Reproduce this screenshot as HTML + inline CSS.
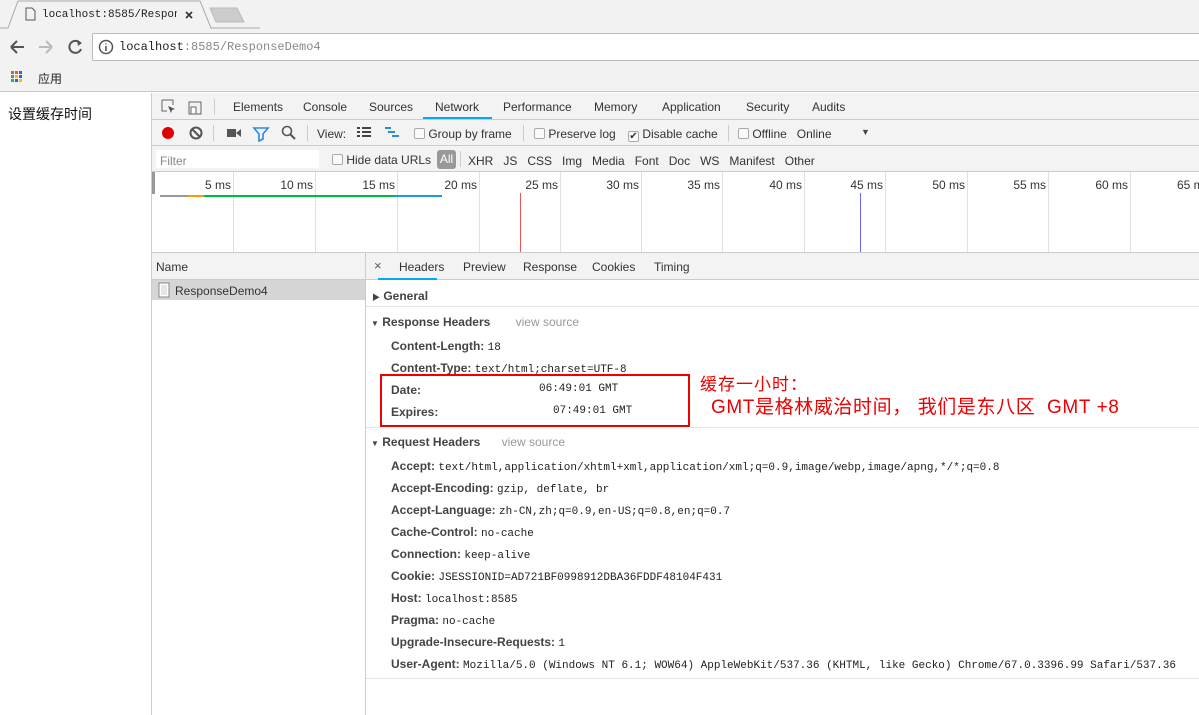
<!DOCTYPE html><html><head><meta charset="utf-8"><style>
*{margin:0;padding:0;box-sizing:border-box}
body{width:1199px;height:715px;overflow:hidden;background:#fff;font-family:"Liberation Sans","Noto Sans CJK SC",sans-serif;font-size:12px;color:#333;position:relative}
.a{position:absolute;white-space:nowrap}
.mono{font-family:"Liberation Mono",monospace;font-size:11px;color:#222}
.b{font-weight:bold;color:#444}
.g{color:#999}
.cb{display:inline-block;width:11px;height:11px;border:1px solid #aaa;border-radius:2px;background:#fafafa;vertical-align:-1px}
</style></head><body>
<div class="a" style="left:0;top:0;width:1199px;height:28px;background:#f2f2f2"></div>
<div class="a" style="left:0;top:28px;width:1199px;height:64px;background:#f2f2f2;border-bottom:1px solid #c8c8c8"></div>
<svg class="a" style="left:0;top:0" width="260" height="30"><path d="M0 28 L8 28 L18 1 L200 1 L211 28 L260 28" fill="#f2f2f2" stroke="#aaa"/><path d="M210 8 L237 8 L244 22 L216 22 Z" fill="#ccc" stroke="#bbb"/><path d="M26 8h6l3 3v9h-9z" fill="none" stroke="#555"/><path d="M186 12l6 6M192 12l-6 6" stroke="#333" stroke-width="1.6"/></svg>
<div class="a mono" style="left:42px;top:9px;font-size:11px;width:135px;overflow:hidden">localhost:8585/Respons<span style="color:#bbb">e</span></div>
<svg class="a" style="left:8px;top:38px" width="80" height="18"><path d="M3 9h13M3 9l6-6M3 9l6 6" stroke="#555" stroke-width="2" fill="none"/><path d="M31 9h13M44 9l-6-6M44 9l-6 6" stroke="#bbb" stroke-width="2" fill="none"/><path d="M72 5a6 6 0 1 0 1 6" stroke="#555" stroke-width="2" fill="none"/><path d="M69 2l5 3-4 3z" fill="#555"/></svg>
<div class="a" style="left:92px;top:33px;width:1110px;height:28px;background:#fff;border:1px solid #bbb;border-radius:2px"></div>
<svg class="a" style="left:98px;top:39px" width="16" height="16"><circle cx="8" cy="8" r="6.5" fill="none" stroke="#555" stroke-width="1.5"/><path d="M8 7v5M8 4.5v1" stroke="#555" stroke-width="1.6"/></svg>
<div class="a mono" style="left:119px;top:40px;font-size:12px;color:#222">localhost<span style="color:#888">:8585/ResponseDemo4</span></div>
<svg class="a" style="left:11px;top:71px" width="12" height="12"><g><rect x="0" y="0" width="3" height="3" fill="#e53"/><rect x="4" y="0" width="3" height="3" fill="#e53"/><rect x="8" y="0" width="3" height="3" fill="#36c"/><rect x="0" y="4" width="3" height="3" fill="#3a5"/><rect x="4" y="4" width="3" height="3" fill="#fb0"/><rect x="8" y="4" width="3" height="3" fill="#36c"/><rect x="0" y="8" width="3" height="3" fill="#3a5"/><rect x="4" y="8" width="3" height="3" fill="#36c"/><rect x="8" y="8" width="3" height="3" fill="#fb0"/></g></svg>
<div class="a" style="left:38px;top:70px;color:#222">应用</div>
<div class="a" style="left:8px;top:104px;font-size:14px;color:#111">设置缓存时间</div>
<div class="a" style="left:151px;top:93px;width:1048px;height:622px;border-left:1px solid #ccc;background:#fff"></div>
<div class="a" style="left:152px;top:93px;width:1047px;height:27px;background:#f3f3f3;border-bottom:1px solid #ccc"></div>
<svg class="a" style="left:160px;top:98px" width="50" height="18"><path d="M2 2h11v5M2 2v11h5" stroke="#666" fill="none"/><path d="M8 8l7 3-3 1-1 3z" fill="#555"/><rect x="29" y="4" width="12" height="12" fill="none" stroke="#666"/><rect x="31" y="9" width="5" height="7" fill="#fff" stroke="#666"/></svg>
<div class="a" style="left:214px;top:99px;width:1px;height:16px;background:#ccc"></div>
<div class="a" style="left:233px;top:100px;color:#333">Elements</div>
<div class="a" style="left:303px;top:100px">Console</div>
<div class="a" style="left:369px;top:100px">Sources</div>
<div class="a" style="left:435px;top:100px">Network</div>
<div class="a" style="left:423px;top:117px;width:69px;height:2px;background:#03a9f4"></div>
<div class="a" style="left:503px;top:100px">Performance</div>
<div class="a" style="left:594px;top:100px">Memory</div>
<div class="a" style="left:662px;top:100px">Application</div>
<div class="a" style="left:746px;top:100px">Security</div>
<div class="a" style="left:812px;top:100px">Audits</div>
<div class="a" style="left:152px;top:120px;width:1047px;height:26px;background:#f3f3f3;border-bottom:1px solid #ccc"></div>
<svg class="a" style="left:158px;top:124px" width="145" height="18"><circle cx="10" cy="9" r="6" fill="#d00"/><circle cx="38" cy="9" r="5.5" fill="none" stroke="#555" stroke-width="2"/><path d="M34 5l8 8" stroke="#555" stroke-width="2"/><rect x="69" y="5" width="9" height="8" fill="#555"/><path d="M78 9l5-4v8z" fill="#555"/><path d="M96 4h14l-5 6v5l-4 2v-7z" fill="none" stroke="#2a8ae0" stroke-width="1.6"/><circle cx="129" cy="7" r="4.5" fill="none" stroke="#555" stroke-width="1.6"/><path d="M132 10l5 5" stroke="#555" stroke-width="2"/></svg>
<div class="a" style="left:213px;top:125px;width:1px;height:16px;background:#ccc"></div>
<div class="a" style="left:307px;top:125px;width:1px;height:16px;background:#ccc"></div>
<div class="a" style="left:317px;top:127px">View:</div>
<svg class="a" style="left:356px;top:126px" width="46" height="14"><path d="M1 2h3M6 2h9M1 6h3M6 6h9M1 10h3M6 10h9" stroke="#444" stroke-width="2"/><path d="M29 2h6M32 6h7M36 10h7" stroke="#2a8ae0" stroke-width="2"/></svg>
<div class="a" style="left:414px;top:127px"><span class="cb"></span> Group by frame</div>
<div class="a" style="left:523px;top:125px;width:1px;height:16px;background:#ccc"></div>
<div class="a" style="left:534px;top:127px"><span class="cb"></span> Preserve log</div>
<div class="a" style="left:628px;top:127px"><span class="cb" style="text-align:center;font-size:10px;line-height:9px">✔</span> Disable cache</div>
<div class="a" style="left:728px;top:125px;width:1px;height:16px;background:#ccc"></div>
<div class="a" style="left:738px;top:127px"><span class="cb"></span> Offline&nbsp;&nbsp; Online</div>
<div class="a" style="left:861px;top:127px;font-size:9px;color:#444">▼</div>
<div class="a" style="left:152px;top:146px;width:1047px;height:26px;background:#f3f3f3;border-bottom:1px solid #ccc"></div>
<div class="a" style="left:156px;top:150px;width:163px;height:18px;background:#fff"></div>
<div class="a" style="left:160px;top:154px;color:#888">Filter</div>
<div class="a" style="left:332px;top:153px"><span class="cb"></span> Hide data URLs</div>
<div class="a" style="left:437px;top:150px;width:19px;height:19px;background:#999;border-radius:3px;color:#fff;text-align:center;line-height:19px">All</div>
<div class="a" style="left:460px;top:151px;width:1px;height:16px;background:#ccc"></div>
<div class="a" style="left:468px;top:154px">XHR&nbsp;&nbsp; JS&nbsp;&nbsp; CSS&nbsp;&nbsp; Img&nbsp;&nbsp; Media&nbsp;&nbsp; Font&nbsp;&nbsp; Doc&nbsp;&nbsp; WS&nbsp;&nbsp; Manifest&nbsp;&nbsp; Other</div>
<div class="a" style="left:152px;top:172px;width:3px;height:22px;background:#999"></div>
<div class="a" style="left:233px;top:172px;width:1px;height:80px;background:#e0e0e0"></div><div class="a" style="left:200px;top:178px;width:31px;text-align:right">5 ms</div>
<div class="a" style="left:315px;top:172px;width:1px;height:80px;background:#e0e0e0"></div><div class="a" style="left:270px;top:178px;width:43px;text-align:right">10 ms</div>
<div class="a" style="left:397px;top:172px;width:1px;height:80px;background:#e0e0e0"></div><div class="a" style="left:352px;top:178px;width:43px;text-align:right">15 ms</div>
<div class="a" style="left:479px;top:172px;width:1px;height:80px;background:#e0e0e0"></div><div class="a" style="left:434px;top:178px;width:43px;text-align:right">20 ms</div>
<div class="a" style="left:560px;top:172px;width:1px;height:80px;background:#e0e0e0"></div><div class="a" style="left:515px;top:178px;width:43px;text-align:right">25 ms</div>
<div class="a" style="left:641px;top:172px;width:1px;height:80px;background:#e0e0e0"></div><div class="a" style="left:596px;top:178px;width:43px;text-align:right">30 ms</div>
<div class="a" style="left:722px;top:172px;width:1px;height:80px;background:#e0e0e0"></div><div class="a" style="left:677px;top:178px;width:43px;text-align:right">35 ms</div>
<div class="a" style="left:804px;top:172px;width:1px;height:80px;background:#e0e0e0"></div><div class="a" style="left:759px;top:178px;width:43px;text-align:right">40 ms</div>
<div class="a" style="left:885px;top:172px;width:1px;height:80px;background:#e0e0e0"></div><div class="a" style="left:840px;top:178px;width:43px;text-align:right">45 ms</div>
<div class="a" style="left:967px;top:172px;width:1px;height:80px;background:#e0e0e0"></div><div class="a" style="left:922px;top:178px;width:43px;text-align:right">50 ms</div>
<div class="a" style="left:1048px;top:172px;width:1px;height:80px;background:#e0e0e0"></div><div class="a" style="left:1003px;top:178px;width:43px;text-align:right">55 ms</div>
<div class="a" style="left:1130px;top:172px;width:1px;height:80px;background:#e0e0e0"></div><div class="a" style="left:1085px;top:178px;width:43px;text-align:right">60 ms</div>
<div class="a" style="left:1177px;top:178px">65 ms</div>
<div class="a" style="left:160px;top:195px;width:28px;height:2px;background:#999"></div>
<div class="a" style="left:188px;top:195px;width:16px;height:2px;background:#f90"></div>
<div class="a" style="left:204px;top:195px;width:192px;height:2px;background:#0b4"></div>
<div class="a" style="left:396px;top:195px;width:46px;height:2px;background:#1a9be8"></div>
<div class="a" style="left:520px;top:193px;width:1px;height:59px;background:#e55"></div>
<div class="a" style="left:860px;top:193px;width:1px;height:59px;background:#66f"></div>
<div class="a" style="left:152px;top:252px;width:1047px;height:1px;background:#ccc"></div>
<div class="a" style="left:152px;top:253px;width:214px;height:27px;background:#f3f3f3;border-bottom:1px solid #ccc"></div>
<div class="a" style="left:156px;top:260px">Name</div>
<div class="a" style="left:152px;top:280px;width:214px;height:20px;background:#d6d6d6"></div>
<svg class="a" style="left:158px;top:282px" width="12" height="16"><path d="M1 1h10v14h-10z" fill="#fff" stroke="#888"/><path d="M3 4h6M3 6h6M3 8h6M3 10h6M3 12h6" stroke="#ccc"/></svg>
<div class="a" style="left:175px;top:284px">ResponseDemo4</div>
<div class="a" style="left:365px;top:253px;width:1px;height:462px;background:#ccc"></div>
<div class="a" style="left:366px;top:253px;width:833px;height:27px;background:#f3f3f3;border-bottom:1px solid #ccc"></div>
<div class="a" style="left:374px;top:258px;font-size:13px;color:#555">×</div>
<div class="a" style="left:399px;top:260px">Headers</div>
<div class="a" style="left:378px;top:278px;width:59px;height:2px;background:#03a9f4"></div>
<div class="a" style="left:463px;top:260px">Preview</div>
<div class="a" style="left:523px;top:260px">Response</div>
<div class="a" style="left:592px;top:260px">Cookies</div>
<div class="a" style="left:654px;top:260px">Timing</div>
<div class="a b" style="left:372px;top:289px"><span style="font-size:8px">▶</span> General</div>
<div class="a" style="left:366px;top:306px;width:833px;height:1px;background:#e4e4e4"></div>
<div class="a b" style="left:371px;top:315px"><span style="font-size:8px">▼</span> Response Headers <span class="g" style="font-weight:normal;margin-left:22px">view source</span></div>
<div class="a" style="left:391px;top:339px"><span class="b">Content-Length:</span> <span class="mono">18</span></div>
<div class="a" style="left:391px;top:361px"><span class="b">Content-Type:</span> <span class="mono">text/html;charset=UTF-8</span></div>
<div class="a b" style="left:391px;top:383px">Date:</div>
<div class="a mono" style="left:539px;top:383px">06:49:01 GMT</div>
<div class="a b" style="left:391px;top:405px">Expires:</div>
<div class="a mono" style="left:553px;top:405px">07:49:01 GMT</div>
<div class="a" style="left:380px;top:374px;width:310px;height:53px;border:2px solid #e00"></div>
<div class="a" style="left:700px;top:370px;font-size:17px;color:#e00;letter-spacing:1px">缓存一小时：</div>
<div class="a" style="left:711px;top:392px;font-size:19px;color:#e00;letter-spacing:0.6px">GMT是格林威治时间， 我们是东八区&nbsp; GMT +8</div>
<div class="a" style="left:690px;top:427px;width:509px;height:1px;background:#e4e4e4"></div>
<div class="a" style="left:366px;top:427px;width:14px;height:1px;background:#e4e4e4"></div>
<div class="a b" style="left:371px;top:435px"><span style="font-size:8px">▼</span> Request Headers <span class="g" style="font-weight:normal;margin-left:18px">view source</span></div>
<div class="a" style="left:391px;top:459px"><span class="b">Accept:</span> <span class="mono">text/html,application/xhtml+xml,application/xml;q=0.9,image/webp,image/apng,*/*;q=0.8</span></div>
<div class="a" style="left:391px;top:481px"><span class="b">Accept-Encoding:</span> <span class="mono">gzip, deflate, br</span></div>
<div class="a" style="left:391px;top:503px"><span class="b">Accept-Language:</span> <span class="mono">zh-CN,zh;q=0.9,en-US;q=0.8,en;q=0.7</span></div>
<div class="a" style="left:391px;top:525px"><span class="b">Cache-Control:</span> <span class="mono">no-cache</span></div>
<div class="a" style="left:391px;top:547px"><span class="b">Connection:</span> <span class="mono">keep-alive</span></div>
<div class="a" style="left:391px;top:569px"><span class="b">Cookie:</span> <span class="mono">JSESSIONID=AD721BF0998912DBA36FDDF48104F431</span></div>
<div class="a" style="left:391px;top:591px"><span class="b">Host:</span> <span class="mono">localhost:8585</span></div>
<div class="a" style="left:391px;top:613px"><span class="b">Pragma:</span> <span class="mono">no-cache</span></div>
<div class="a" style="left:391px;top:635px"><span class="b">Upgrade-Insecure-Requests:</span> <span class="mono">1</span></div>
<div class="a" style="left:391px;top:657px"><span class="b">User-Agent:</span> <span class="mono">Mozilla/5.0 (Windows NT 6.1; WOW64) AppleWebKit/537.36 (KHTML, like Gecko) Chrome/67.0.3396.99 Safari/537.36</span></div>
<div class="a" style="left:366px;top:678px;width:833px;height:1px;background:#e4e4e4"></div>
</body></html>
